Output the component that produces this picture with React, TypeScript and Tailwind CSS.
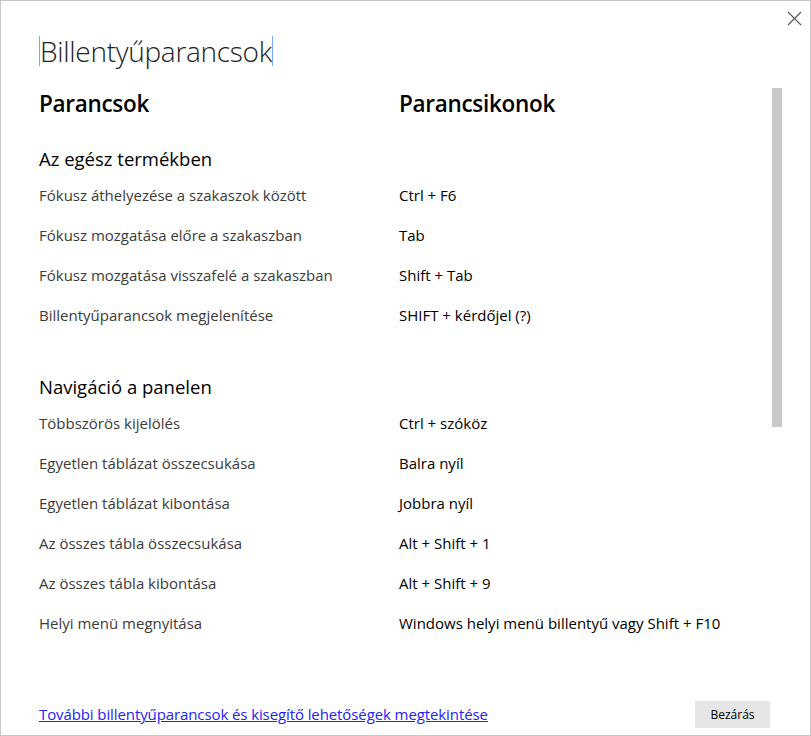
import React from "react";

type Shortcut = { label: string; keys: string };

const sections: { title: string; items: Shortcut[] }[] = [
  {
    title: "Az egész termékben",
    items: [
      { label: "Fókusz áthelyezése a szakaszok között", keys: "Ctrl + F6" },
      { label: "Fókusz mozgatása előre a szakaszban", keys: "Tab" },
      { label: "Fókusz mozgatása visszafelé a szakaszban", keys: "Shift + Tab" },
      { label: "Billentyűparancsok megjelenítése", keys: "SHIFT + kérdőjel (?)" },
    ],
  },
  {
    title: "Navigáció a panelen",
    items: [
      { label: "Többszörös kijelölés", keys: "Ctrl + szóköz" },
      { label: "Egyetlen táblázat összecsukása", keys: "Balra nyíl" },
      { label: "Egyetlen táblázat kibontása", keys: "Jobbra nyíl" },
      { label: "Az összes tábla összecsukása", keys: "Alt + Shift + 1" },
      { label: "Az összes tábla kibontása", keys: "Alt + Shift + 9" },
      { label: "Helyi menü megnyitása", keys: "Windows helyi menü billentyű vagy Shift + F10" },
    ],
  },
];

export default function App() {
  return (
    <div className="relative flex h-[736px] w-[811px] flex-col border border-[#c6c6c6] bg-white font-['Open_Sans',sans-serif] text-black">
      <button className="absolute right-[8px] top-[9px] flex h-[16px] w-[16px] items-center justify-center text-[#555]">
        <svg width="15" height="15" viewBox="0 0 15 15" fill="none" stroke="currentColor" strokeWidth="1.1">
          <path d="M1 1 L14 14 M14 1 L1 14" />
        </svg>
      </button>

      <div className="flex h-[40px] items-center pl-[38px] pt-[30px] box-content">
        <span className="h-[30px] w-px bg-[#7aa7f2]" />
        <h1 className="text-[28px] font-light leading-none tracking-[-0.3px] text-[#222]">
          Billentyűparancsok
        </h1>
        <span className="h-[30px] w-px bg-[#7aa7f2]" />
      </div>

      <div className="flex flex-1 pt-[13px]">
        <div className="flex-1 pl-[38px]">
          <div className="grid h-[40px] grid-cols-[360px_1fr] items-center text-[22.5px] font-semibold tracking-[-0.3px]">
            <div>Parancsok</div>
            <div>Parancsikonok</div>
          </div>

          {sections.map((section, i) => (
            <div key={section.title} className={i === 0 ? "mt-[19px]" : "mt-[36px]"}>
              <h2 className="flex h-[32px] items-center text-[18.5px]">
                {section.title}
              </h2>
              {section.items.map(item => (
                <div
                  key={item.label}
                  className="grid h-[40px] grid-cols-[360px_1fr] items-center text-[15px]"
                >
                  <div className="text-[#3b3b3b]">{item.label}</div>
                  <div>{item.keys}</div>
                </div>
              ))}
            </div>
          ))}
        </div>
        <div className="mr-[28px] w-[10px]">
          <div className="mt-[4px] h-[339px] w-[10px] bg-[#c8c8c8]" />
        </div>
      </div>

      <div className="flex items-center justify-between pb-[7px] pl-[38px] pr-[40px]">
        <a href="#" className="text-[15px] tracking-[-0.1px] text-[#2323f5] underline">
          További billentyűparancsok és kisegítő lehetőségek megtekintése
        </a>
        <button className="h-[27px] w-[75px] bg-[#e6e6e6] text-[12px] text-black">Bezárás</button>
      </div>
    </div>
  );
}
